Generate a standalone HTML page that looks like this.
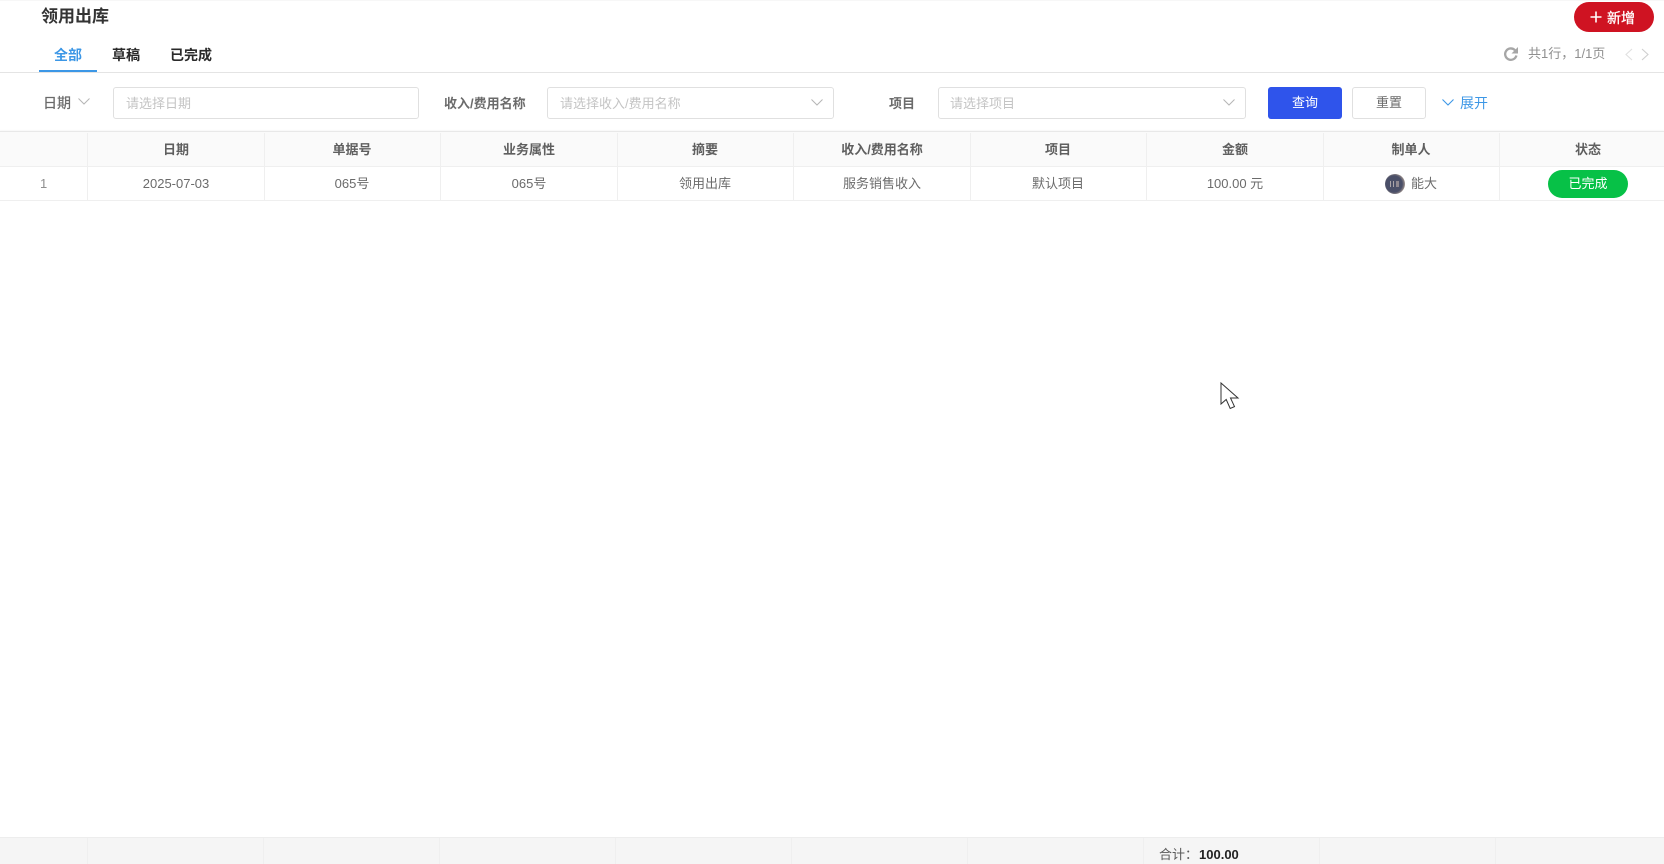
<!DOCTYPE html>
<html lang="zh">
<head>
<meta charset="utf-8">
<title>领用出库</title>
<style>
html,body{margin:0;padding:0;width:1664px;height:864px;overflow:hidden;background:#fff;}
body{position:relative;font-family:"Liberation Sans","Noto Sans CJK SC",sans-serif;font-size:13px;color:#595959;}
.a{position:absolute;white-space:nowrap;}
.box{position:absolute;box-sizing:border-box;border:1px solid #e0e0e0;border-radius:3px;background:#fff;}
.ph{position:absolute;color:#c4c4c4;font-size:13px;line-height:20px;top:94px;white-space:nowrap;}
.lbl{position:absolute;top:94px;line-height:20px;font-size:13px;font-weight:bold;color:#6b6b6b;white-space:nowrap;}
.c{position:absolute;text-align:center;width:176px;line-height:20px;white-space:nowrap;}
.h{top:140px;font-weight:bold;color:#5f5f5f;}
.d{top:174px;color:#6b6b6b;}
.v{position:absolute;width:1px;background:#efefef;}
svg{position:absolute;overflow:visible;}
</style>
</head>
<body>
<div class="a" style="left:0;top:0;width:1664px;height:1px;background:#f7f7f7"></div>
<div class="a" style="left:41px;top:5px;font-size:17px;line-height:24px;font-weight:bold;color:#333">领用出库</div>

<div class="a" style="left:54px;top:45px;font-size:14px;line-height:20px;font-weight:bold;color:#3c97e6">全部</div>
<div class="a" style="left:112px;top:45px;font-size:14px;line-height:20px;font-weight:bold;color:#2a2a2a">草稿</div>
<div class="a" style="left:170px;top:45px;font-size:14px;line-height:20px;font-weight:bold;color:#2a2a2a">已完成</div>
<div class="a" style="left:39px;top:70px;width:58px;height:3px;background:#3c97e6"></div>
<div class="a" style="left:0;top:72px;width:1664px;height:1px;background:#e4e4e4"></div>

<div class="a" style="left:1574px;top:2px;width:80px;height:30px;border-radius:15px;background:#cf1322"></div>
<svg style="left:1590px;top:11px" width="12" height="12" viewBox="0 0 12 12"><path d="M6 0.500V11.500M0.500 6H11.500" stroke="#fff" stroke-width="1.600" fill="none"/></svg>
<div class="a" style="left:1607px;top:8px;font-size:14px;line-height:20px;color:#fff;-webkit-text-stroke:0.300px #fff">新增</div>

<svg style="left:1503px;top:46px" width="16" height="16" viewBox="0 0 16 16"><path d="M13.400 9.500A5.700 5.700 0 1 1 12 4.200" stroke="#a6a6a6" stroke-width="2.300" fill="none"/><path d="M15 1V7.500H8.500Z" fill="#a6a6a6"/></svg>
<div class="a" style="left:1528px;top:44px;line-height:20px;color:#8f8f8f">共1行，1/1页</div>
<svg style="left:1624px;top:48px" width="10" height="13" viewBox="0 0 10 13"><path d="M8 1L2 6.500L8 12" stroke="#e0e0e0" stroke-width="1.100" fill="none"/></svg>
<svg style="left:1640px;top:48px" width="10" height="13" viewBox="0 0 10 13"><path d="M2 1L8 6.500L2 12" stroke="#cfcfcf" stroke-width="1.100" fill="none"/></svg>

<div class="lbl" style="left:43px;font-size:14px;font-weight:normal;-webkit-text-stroke:0.250px #6b6b6b;top:93px">日期</div>
<svg style="left:78px;top:98px" width="12" height="7" viewBox="0 0 12 7"><path d="M0.500 0.500L6 6L11.500 0.500" stroke="#b5b5b5" stroke-width="1" fill="none"/></svg>
<div class="box" style="left:113px;top:87px;width:306px;height:32px"></div>
<div class="ph" style="left:126px">请选择日期</div>

<div class="lbl" style="left:444px">收入/费用名称</div>
<div class="box" style="left:547px;top:87px;width:287px;height:32px"></div>
<div class="ph" style="left:560px">请选择收入/费用名称</div>
<svg style="left:811px;top:99px" width="12" height="7" viewBox="0 0 12 7"><path d="M0.500 0.500L6 6L11.500 0.500" stroke="#b5b5b5" stroke-width="1" fill="none"/></svg>

<div class="lbl" style="left:889px">项目</div>
<div class="box" style="left:938px;top:87px;width:308px;height:32px"></div>
<div class="ph" style="left:950px">请选择项目</div>
<svg style="left:1223px;top:99px" width="12" height="7" viewBox="0 0 12 7"><path d="M0.500 0.500L6 6L11.500 0.500" stroke="#b5b5b5" stroke-width="1" fill="none"/></svg>

<div class="a" style="left:1268px;top:87px;width:74px;height:32px;line-height:32px;background:#2f54eb;border-radius:3px;color:#fff;text-align:center">查询</div>
<div class="box" style="left:1352px;top:87px;width:74px;height:32px;line-height:29px;text-align:center;color:#6b6b6b">重置</div>
<svg style="left:1442px;top:99px" width="12" height="7" viewBox="0 0 12 7"><path d="M0.500 0.500L6 6L11.500 0.500" stroke="#3c97e6" stroke-width="1.100" fill="none"/></svg>
<div class="a" style="left:1460px;top:93px;line-height:20px;color:#3c97e6;font-size:14px">展开</div>

<div class="a" style="left:0;top:131px;width:1664px;height:36px;background:#fafafa;border-top:1px solid #e8e8e8;border-bottom:1px solid #efefef;box-sizing:border-box;box-shadow:0 -1px 1px rgba(0,0,0,.03)"></div>
<div class="a" style="left:0;top:200px;width:1664px;height:1px;background:#efefef"></div>
<div class="v" style="left:87px;top:133px;height:67px"></div>
<div class="v" style="left:264px;top:133px;height:67px"></div>
<div class="v" style="left:440px;top:133px;height:67px"></div>
<div class="v" style="left:617px;top:133px;height:67px"></div>
<div class="v" style="left:793px;top:133px;height:67px"></div>
<div class="v" style="left:970px;top:133px;height:67px"></div>
<div class="v" style="left:1146px;top:133px;height:67px"></div>
<div class="v" style="left:1323px;top:133px;height:67px"></div>
<div class="v" style="left:1499px;top:133px;height:67px"></div>

<div class="c h" style="left:88px">日期</div>
<div class="c h" style="left:264px">单据号</div>
<div class="c h" style="left:441px">业务属性</div>
<div class="c h" style="left:617px">摘要</div>
<div class="c h" style="left:794px">收入/费用名称</div>
<div class="c h" style="left:970px">项目</div>
<div class="c h" style="left:1147px">金额</div>
<div class="c h" style="left:1323px">制单人</div>
<div class="c h" style="left:1500px">状态</div>

<div class="a" style="left:40px;top:174px;line-height:20px;color:#8f8f8f">1</div>
<div class="c d" style="left:88px">2025-07-03</div>
<div class="c d" style="left:264px">065号</div>
<div class="c d" style="left:441px">065号</div>
<div class="c d" style="left:617px">领用出库</div>
<div class="c d" style="left:794px">服务销售收入</div>
<div class="c d" style="left:970px">默认项目</div>
<div class="c d" style="left:1147px">100.00 元</div>
<div class="a" style="left:1385px;top:174px;width:20px;height:20px;border-radius:50%;background:radial-gradient(circle at 45% 50%,#4a4f68 0,#4a4f68 55%,#b9a697 80%,#dccdc2 100%)"></div>
<div class="a" style="left:1390px;top:181px;width:1px;height:6px;background:#a9a4a8"></div>
<div class="a" style="left:1393px;top:181px;width:1px;height:6px;background:#a9a4a8"></div>
<div class="a" style="left:1396px;top:181px;width:3px;height:6px;background:#8f8890"></div>
<div class="a" style="left:1411px;top:174px;line-height:20px;color:#6b6b6b">能大</div>
<div class="a" style="left:1548px;top:170px;width:80px;height:28px;border-radius:14px;background:#07c147;color:#fff;text-align:center;line-height:27px">已完成</div>

<svg style="left:1220px;top:382px" width="20" height="28" viewBox="0 0 20 28"><path d="M1 1V22L6.200 17.500L10.200 26.500L14.500 24.600L10.500 16H18Z" fill="#fff" stroke="#333" stroke-width="1"/></svg>

<div class="a" style="left:0;top:837px;width:1664px;height:27px;background:#f5f5f5;border-top:1px solid #ededed;box-sizing:border-box"></div>
<div class="v" style="left:87px;top:838px;height:26px"></div>
<div class="v" style="left:263px;top:838px;height:26px"></div>
<div class="v" style="left:439px;top:838px;height:26px"></div>
<div class="v" style="left:615px;top:838px;height:26px"></div>
<div class="v" style="left:791px;top:838px;height:26px"></div>
<div class="v" style="left:967px;top:838px;height:26px"></div>
<div class="v" style="left:1143px;top:838px;height:26px"></div>
<div class="v" style="left:1319px;top:838px;height:26px"></div>
<div class="v" style="left:1495px;top:838px;height:26px"></div>
<div class="a" style="left:1159px;top:845px;line-height:20px;color:#595959">合计：<span style="color:#222;font-weight:bold;margin-left:1px">100.00</span></div>
</body>
</html>
